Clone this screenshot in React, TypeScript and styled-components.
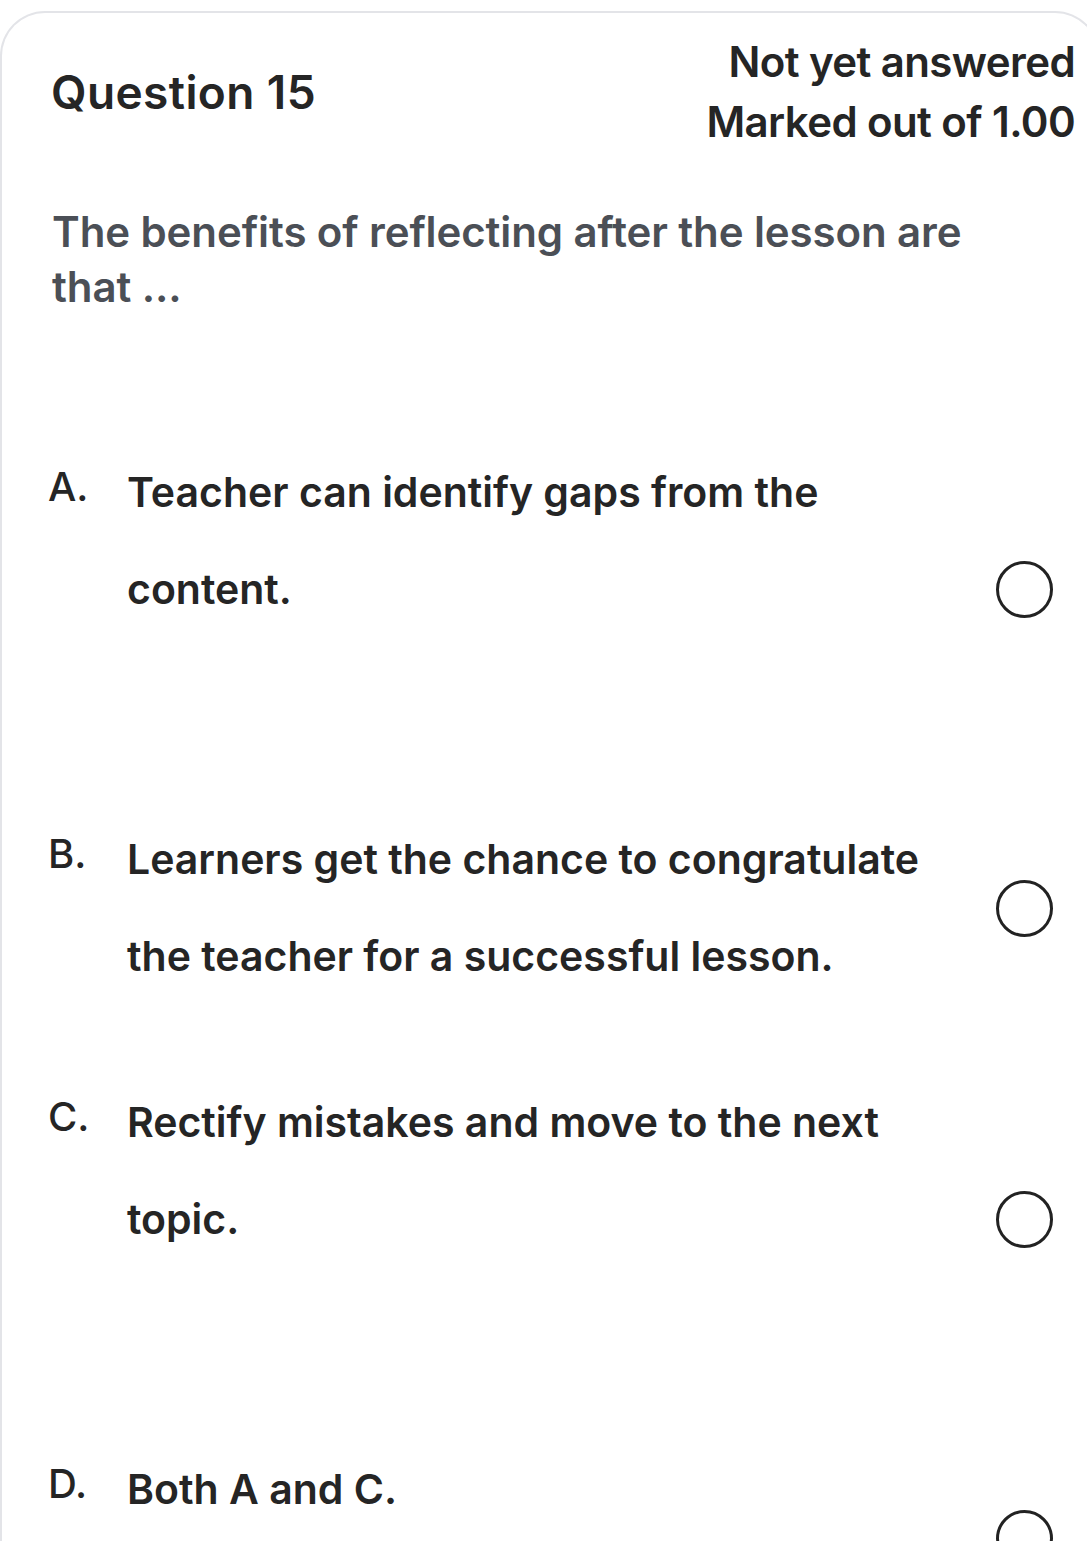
import React from "react";
import styled, { createGlobalStyle } from "styled-components";

const GlobalStyle = createGlobalStyle`
  html, body {
    margin: 0;
    padding: 0;
    background: #ffffff;
    overflow-x: hidden;
  }
  body {
    font-family: Inter, "Noto Sans", "Liberation Sans", sans-serif;
    color: #252525;
  }
`;

const Card = styled.div`
  margin-top: 11px;
  width: 1100px;
  box-sizing: border-box;
  border: 2px solid #e3e4e8;
  border-bottom: none;
  border-radius: 45px 45px 0 0;
  padding: 19px 23px 0 46px;
`;

const Header = styled.div`
  display: flex;
  justify-content: space-between;
  align-items: center;
`;

const QuestionNo = styled.h2`
  margin: 0 0 0 3px;
  font-size: 46px;
  font-weight: 600;
  letter-spacing: 0.4px;
  line-height: 60px;
`;

const Status = styled.div`
  text-align: right;
  font-size: 42px;
  font-weight: 600;
  line-height: 60px;
  letter-spacing: -0.6px;
`;

const Prompt = styled.p`
  margin: 52px 0 0 4px;
  max-width: 940px;
  font-size: 42px;
  font-weight: 600;
  line-height: 55px;
  color: #4b4f56;
  letter-spacing: -0.1px;
`;

const Options = styled.div`
  margin-top: 130px;
  display: flex;
  flex-direction: column;
`;

const Option = styled.label<{ $space: number }>`
  display: flex;
  align-items: center;
  margin-top: ${(p) => p.$space}px;
  cursor: pointer;
`;

const Letter = styled.span`
  flex: 0 0 79px;
  align-self: flex-start;
  margin-top: -6px;
  font-size: 40px;
  font-weight: 500;
  line-height: 97px;
`;

const OptionText = styled.span<{ $extra?: number }>`
  flex: 0 0 820px;
  font-size: 41px;
  font-weight: 600;
  line-height: 97px;
  padding-bottom: ${(p) => (p.$extra ?? 0) * 97}px;
`;

const Radio = styled.span`
  flex: 0 0 auto;
  width: 57px;
  height: 57px;
  box-sizing: border-box;
  border: 3px solid #222222;
  border-radius: 50%;
  margin-left: auto;
  margin-right: 22px;
`;

const options = [
  { key: "A.", text: "Teacher can identify gaps from the content.", extra: 1, space: 0 },
  {
    key: "B.",
    text: "Learners get the chance to congratulate the teacher for a successful lesson.",
    extra: 0,
    space: 76,
  },
  { key: "C.", text: "Rectify mistakes and move to the next topic.", extra: 1, space: 69 },
  { key: "D.", text: "Both A and C.", extra: 1, space: 76 },
];

export default function App() {
  return (
    <>
      <GlobalStyle />
      <Card>
        <Header>
          <QuestionNo>Question 15</QuestionNo>
          <Status>
            <div>Not yet answered</div>
            <div>Marked out of 1.00</div>
          </Status>
        </Header>
        <Prompt>The benefits of reflecting after the lesson are that ...</Prompt>
        <Options>
          {options.map((o) => (
            <Option key={o.key} $space={o.space}>
              <Letter>{o.key}</Letter>
              <OptionText $extra={o.extra}>{o.text}</OptionText>
              <Radio />
            </Option>
          ))}
        </Options>
      </Card>
    </>
  );
}
